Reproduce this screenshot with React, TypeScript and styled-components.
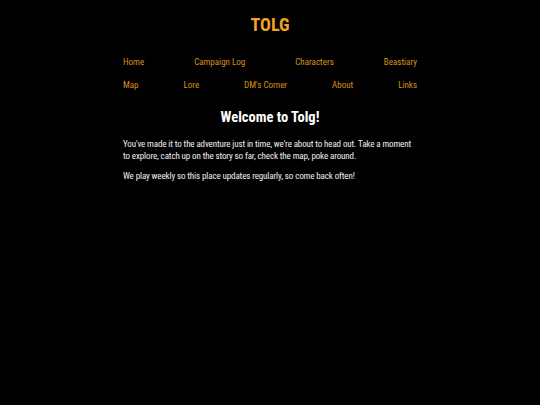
import React from "react";
import styled, { createGlobalStyle } from "styled-components";

const Global = createGlobalStyle`
  html, body { margin: 0; padding: 0; background: #000; }
  body { font-family: "Roboto Condensed", "DejaVu Sans Condensed", sans-serif; color: #fff; }
`;

const Page = styled.div`
  width: 294px;
  margin: 0 auto;
  padding-top: 13px;
`;

const Title = styled.h1`
  margin: 0;
  text-align: center;
  color: #f2a21e;
  font-size: 18px;
  font-weight: bold;
  line-height: 24px;
`;

const Nav = styled.nav`
  margin-top: 19px;
  display: flex;
  flex-direction: column;
  gap: 11px;
`;

const NavRow = styled.div`
  display: flex;
  justify-content: space-between;
`;

const NavLink = styled.a`
  color: #d8921a;
  font-size: 9px;
  line-height: 12px;
  text-decoration: none;
`;

const Heading = styled.h2`
  margin: 17px 0 0;
  text-align: center;
  font-size: 14.5px;
  font-weight: bold;
  line-height: 20px;
  color: #fff;
`;

const Para = styled.p<{ $gap: number }>`
  margin: ${(p) => p.$gap}px 0 0;
  font-size: 9px;
  letter-spacing: -0.12px;
  line-height: 12px;
  color: #f0f0f0;
`;

const row1 = ["Home", "Campaign Log", "Characters", "Beastiary"];
const row2 = ["Map", "Lore", "DM's Corner", "About", "Links"];

export default function App() {
  return (
    <>
      <Global />
      <Page>
        <Title>TOLG</Title>
        <Nav>
          <NavRow>
            {row1.map((l) => (
              <NavLink key={l} href="#">{l}</NavLink>
            ))}
          </NavRow>
          <NavRow>
            {row2.map((l) => (
              <NavLink key={l} href="#">{l}</NavLink>
            ))}
          </NavRow>
        </Nav>
        <Heading>Welcome to Tolg!</Heading>
        <Para $gap={10}>
          You've made it to the adventure just in time, we're about to head out. Take a moment to explore, catch up on the story so far, check the map, poke around.
        </Para>
        <Para $gap={8}>We play weekly so this place updates regularly, so come back often!</Para>
      </Page>
    </>
  );
}
